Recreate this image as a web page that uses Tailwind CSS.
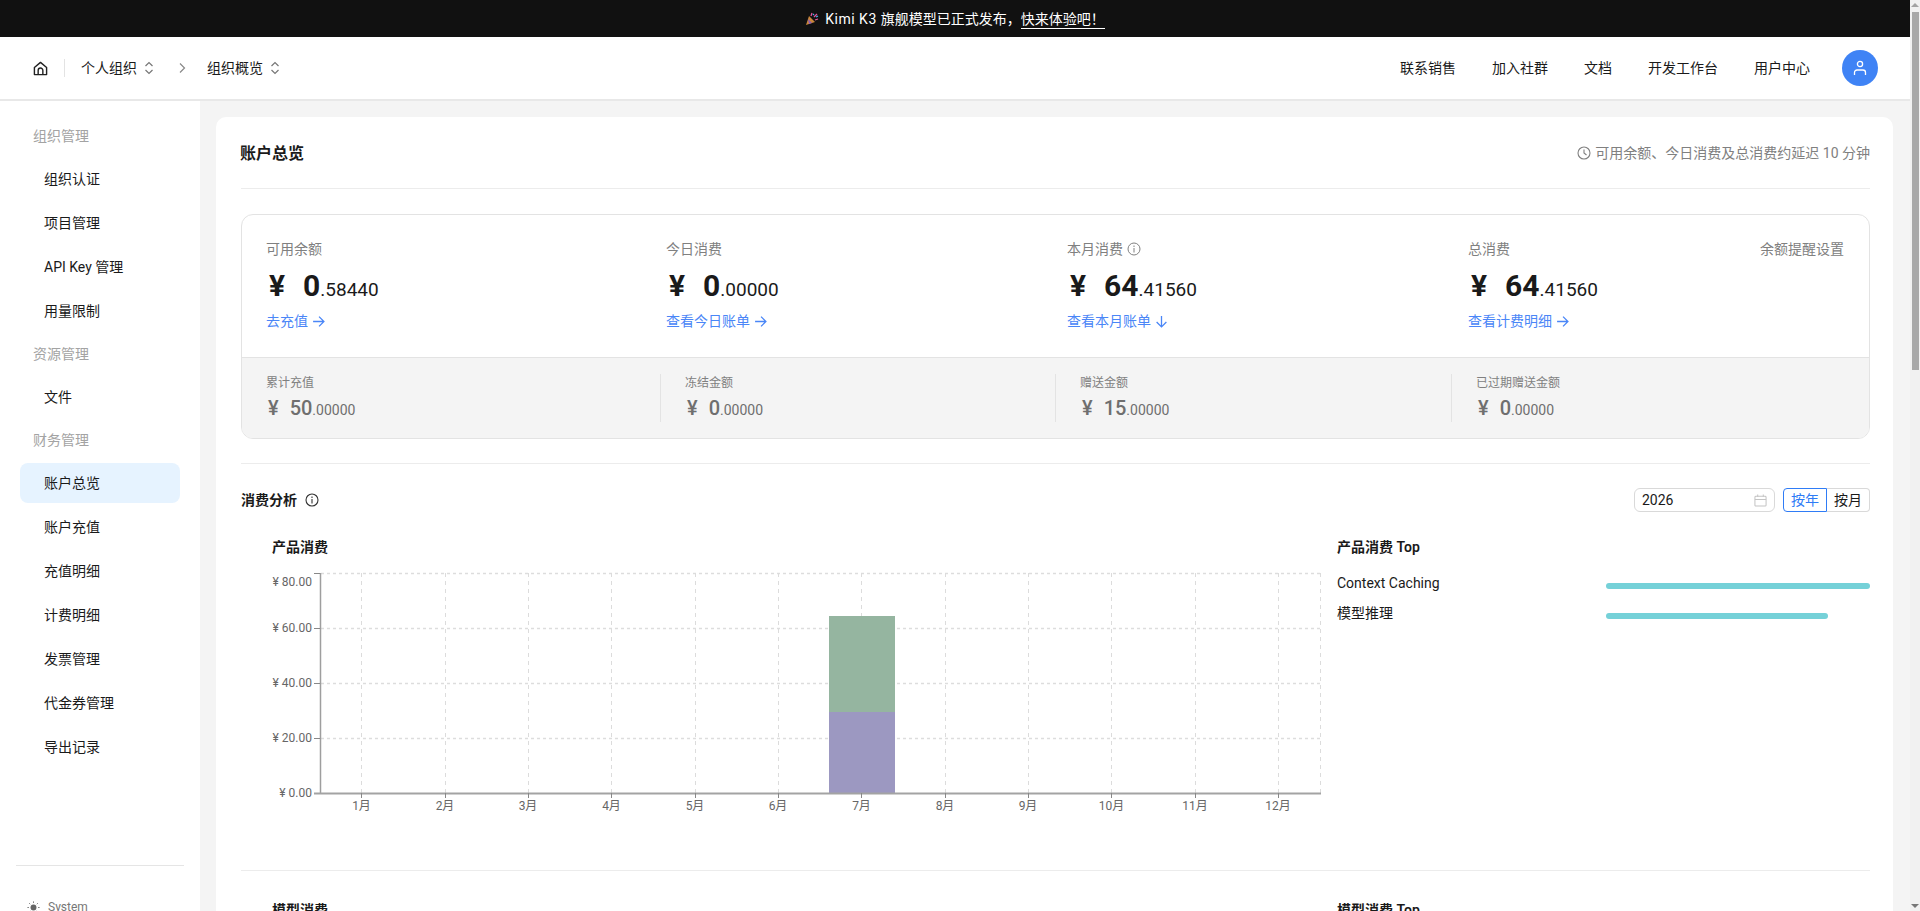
<!DOCTYPE html>
<html lang="zh-CN">
<head>
    <meta charset="UTF-8">
    <meta name="viewport" content="width=device-width, initial-scale=1.0">
    <title>账户总览</title>
    <script src="https://cdn.jsdelivr.net/npm/@tailwindcss/browser@4"></script>
</head>
<body class="h-screen overflow-hidden flex bg-white text-[#1a1a1a] text-sm font-['Roboto','Noto_Sans_CJK_SC',sans-serif]">
    <div class="flex-1 min-w-0 flex flex-col">
        <!-- Banner -->
        <div class="h-[37px] shrink-0 bg-[#111111] text-white flex items-center justify-center gap-[6px]">
            <svg class="w-[14px] h-[14px]" viewBox="0 0 14 14">
                <path d="M1 13 L4 4 L10 10 Z" fill="#c9863a"/>
                <path d="M3 7 L7 11 L4 12 Z" fill="#8a5bb8"/>
                <path d="M6 4 L7 1 M9 5 L12 2 M10 8 L13 7" stroke="#e0559a" stroke-width="1.3"/>
                <path d="M8 2 L9 3 M11 5 L13 4" stroke="#4fb0e8" stroke-width="1.3"/>
            </svg>
            <span><span class="tracking-[0.5px]">Kimi K3 </span>旗舰模型已正式发布，<a class="border-b border-white pb-px">快来体验吧！</a></span>
        </div>

        <!-- Header -->
        <header class="h-[64px] shrink-0 bg-white border-b-2 border-[#e8e8e8] flex items-center justify-between pl-[33px] pr-[32px]">
            <div class="flex items-center">
                <svg class="w-[15px] h-[15px]" viewBox="0 0 16 16" fill="none" stroke="#222" stroke-width="1.5" stroke-linejoin="round">
                    <path d="M1.5 7 L8 1.5 L14.5 7 V14.5 H1.5 Z"/>
                    <path d="M5.5 14.5 V10 A2.5 2.5 0 0 1 10.5 10 V14.5"/>
                </svg>
                <div class="w-px h-[18px] bg-[#e3e3e3] ml-[16px] mr-[16px]"></div>
                <span>个人组织</span>
                <svg class="w-[10px] h-[14px] ml-[7px] text-[#777]" viewBox="0 0 10 14" fill="none" stroke="currentColor" stroke-width="1.2">
                    <path d="M1.5 5 L5 1.5 L8.5 5 M1.5 9 L5 12.5 L8.5 9"/>
                </svg>
                <svg class="w-[7px] h-[12px] ml-[25px] mr-[21px] text-[#888]" viewBox="0 0 7 12" fill="none" stroke="currentColor" stroke-width="1.2">
                    <path d="M1 1.5 L5.5 6 L1 10.5"/>
                </svg>
                <span>组织概览</span>
                <svg class="w-[10px] h-[14px] ml-[7px] text-[#777]" viewBox="0 0 10 14" fill="none" stroke="currentColor" stroke-width="1.2">
                    <path d="M1.5 5 L5 1.5 L8.5 5 M1.5 9 L5 12.5 L8.5 9"/>
                </svg>
            </div>
            <div class="flex items-center gap-[36px]">
                <span>联系销售</span>
                <span>加入社群</span>
                <span>文档</span>
                <span>开发工作台</span>
                <span>用户中心</span>
                <div class="w-[36px] h-[36px] -ml-[4px] rounded-full bg-[#3f83f5] flex items-center justify-center">
                    <svg class="w-[14px] h-[16px]" viewBox="0 0 14 16" fill="none" stroke="white" stroke-width="1.3">
                        <circle cx="7" cy="4" r="2.6"/>
                        <path d="M1.5 15 V12.5 A2.5 2.5 0 0 1 4 10 H10 A2.5 2.5 0 0 1 12.5 12.5 V15"/>
                    </svg>
                </div>
            </div>
        </header>

        <div class="flex-1 min-h-0 flex">
            <!-- Sidebar -->
            <aside class="w-[200px] shrink-0 bg-white flex flex-col px-[16px] pt-[16px]">
                <div class="flex flex-col gap-[4px] flex-1 mx-[4px]">
                    <div class="h-[38px] flex items-center pl-[13px] text-[#a3a3a3]">组织管理</div>
                    <div class="h-[40px] flex items-center pl-[24px]">组织认证</div>
                    <div class="h-[40px] flex items-center pl-[24px]">项目管理</div>
                    <div class="h-[40px] flex items-center pl-[24px]">API Key 管理</div>
                    <div class="h-[40px] flex items-center pl-[24px]">用量限制</div>
                    <div class="h-[38px] flex items-center pl-[13px] text-[#a3a3a3]">资源管理</div>
                    <div class="h-[40px] flex items-center pl-[24px]">文件</div>
                    <div class="h-[38px] flex items-center pl-[13px] text-[#a3a3a3]">财务管理</div>
                    <div class="h-[40px] flex items-center pl-[24px] rounded-lg bg-[#e6f3ff]">账户总览</div>
                    <div class="h-[40px] flex items-center pl-[24px]">账户充值</div>
                    <div class="h-[40px] flex items-center pl-[24px]">充值明细</div>
                    <div class="h-[40px] flex items-center pl-[24px]">计费明细</div>
                    <div class="h-[40px] flex items-center pl-[24px]">发票管理</div>
                    <div class="h-[40px] flex items-center pl-[24px]">代金券管理</div>
                    <div class="h-[40px] flex items-center pl-[24px]">导出记录</div>
                </div>
                <div class="h-[46px] shrink-0 border-t border-[#e5e5e5] pl-[11px] pt-[33px] flex items-start gap-[8px] text-xs text-[#777]">
                    <svg class="w-[13px] h-[13px] shrink-0 mt-[2px]" viewBox="0 0 14 14" fill="#666" stroke="#666">
                        <circle cx="7" cy="7" r="3.2" stroke="none"/>
                        <path d="M7 0.5 V2 M7 12 V13.5 M0.5 7 H2 M12 7 H13.5 M2.4 2.4 L3.4 3.4 M10.6 10.6 L11.6 11.6 M2.4 11.6 L3.4 10.6 M10.6 3.4 L11.6 2.4" stroke-width="1"/>
                    </svg>
                    <span class="leading-[16px]">System</span>
                </div>
            </aside>

            <!-- Main -->
            <main class="flex-1 min-w-0 bg-[#f4f4f4] pt-[16px] pl-[16px] pr-[17px]">
                <div class="bg-white rounded-t-[10px] pl-[25px] pr-[23px] h-[820px]">
                    <div class="h-[72px] border-b border-[#ececec] flex items-center justify-between">
                        <h1 class="text-base font-semibold mt-[2px] -ml-px">账户总览</h1>
                        <div class="flex items-center gap-[4px] text-[#808080]">
                            <svg class="w-[14px] h-[14px]" viewBox="0 0 14 14" fill="none" stroke="currentColor" stroke-width="1.1">
                                <circle cx="7" cy="7" r="6"/>
                                <path d="M7 3.5 V7 L9.5 9"/>
                            </svg>
                            <span>可用余额、今日消费及总消费约延迟 10 分钟</span>
                        </div>
                    </div>

                    <!-- Balance box -->
                    <div class="mt-[25px] border border-[#e3e3e3] rounded-xl overflow-hidden">
                        <div class="h-[142px] pl-[24px] pr-[25px] pt-[23px] grid grid-cols-[400px_401px_401px_1fr]">
                            <div>
                                <div class="h-[22px] leading-[22px] text-[#808080]">可用余额</div>
                                <div class="mt-[6px] h-[40px] leading-[40px] whitespace-nowrap"><span class="text-[30px] font-bold ml-[3px] mr-[18px]">¥</span><span class="text-[30px] font-bold">0</span><span class="text-[19px]">.58440</span></div>
                                <a class="mt-[4px] h-[22px] flex items-center gap-[4px] text-[#4a86f7]">去充值
                                    <svg class="w-[13px] h-[13px]" viewBox="0 0 12 12" fill="none" stroke="currentColor" stroke-width="1.2"><path d="M1 6 H11 M6.5 1.5 L11 6 L6.5 10.5"/></svg>
                                </a>
                            </div>
                            <div>
                                <div class="h-[22px] leading-[22px] text-[#808080]">今日消费</div>
                                <div class="mt-[6px] h-[40px] leading-[40px] whitespace-nowrap"><span class="text-[30px] font-bold ml-[3px] mr-[18px]">¥</span><span class="text-[30px] font-bold">0</span><span class="text-[19px]">.00000</span></div>
                                <a class="mt-[4px] h-[22px] flex items-center gap-[4px] text-[#4a86f7]">查看今日账单
                                    <svg class="w-[13px] h-[13px]" viewBox="0 0 12 12" fill="none" stroke="currentColor" stroke-width="1.2"><path d="M1 6 H11 M6.5 1.5 L11 6 L6.5 10.5"/></svg>
                                </a>
                            </div>
                            <div>
                                <div class="h-[22px] flex items-center gap-[4px] text-[#808080]">本月消费
                                    <svg class="w-[14px] h-[14px]" viewBox="0 0 14 14" fill="none" stroke="currentColor" stroke-width="1"><circle cx="7" cy="7" r="6"/><path d="M7 6 V10.5 M7 3.5 V5"/></svg>
                                </div>
                                <div class="mt-[6px] h-[40px] leading-[40px] whitespace-nowrap"><span class="text-[30px] font-bold ml-[3px] mr-[18px]">¥</span><span class="text-[30px] font-bold">64</span><span class="text-[19px]">.41560</span></div>
                                <a class="mt-[4px] h-[22px] flex items-center gap-[4px] text-[#4a86f7]">查看本月账单
                                    <svg class="w-[13px] h-[13px]" viewBox="0 0 12 12" fill="none" stroke="currentColor" stroke-width="1.2"><path d="M6 1 V11 M1.5 6.5 L6 11 L10.5 6.5"/></svg>
                                </a>
                            </div>
                            <div class="relative">
                                <div class="h-[22px] leading-[22px] text-[#808080]">总消费</div>
                                <div class="mt-[6px] h-[40px] leading-[40px] whitespace-nowrap"><span class="text-[30px] font-bold ml-[3px] mr-[18px]">¥</span><span class="text-[30px] font-bold">64</span><span class="text-[19px]">.41560</span></div>
                                <a class="mt-[4px] h-[22px] flex items-center gap-[4px] text-[#4a86f7]">查看计费明细
                                    <svg class="w-[13px] h-[13px]" viewBox="0 0 12 12" fill="none" stroke="currentColor" stroke-width="1.2"><path d="M1 6 H11 M6.5 1.5 L11 6 L6.5 10.5"/></svg>
                                </a>
                                <span class="absolute top-0 right-0 leading-[22px] text-[#808080]">余额提醒设置</span>
                            </div>
                        </div>
                        <div class="h-[81px] bg-[#f4f4f4] border-t border-[#e3e3e3] pl-[24px] pr-[25px] pt-[16px] grid grid-cols-[394px_395px_396px_1fr]">
                            <div class="h-[48px]">
                                <div class="text-xs leading-[18px] text-[#808080]">累计充值</div>
                                <div class="h-[30px] mt-px leading-[30px] text-[#6f6f6f] whitespace-nowrap"><span class="text-[20px] font-medium ml-[2px] mr-[11px]">¥</span><span class="text-[20px] font-medium">50</span><span class="text-sm">.00000</span></div>
                            </div>
                            <div class="h-[48px] border-l border-[#e3e3e3] pl-[24px]">
                                <div class="text-xs leading-[18px] text-[#808080]">冻结金额</div>
                                <div class="h-[30px] mt-px leading-[30px] text-[#6f6f6f] whitespace-nowrap"><span class="text-[20px] font-medium ml-[2px] mr-[11px]">¥</span><span class="text-[20px] font-medium">0</span><span class="text-sm">.00000</span></div>
                            </div>
                            <div class="h-[48px] border-l border-[#e3e3e3] pl-[24px]">
                                <div class="text-xs leading-[18px] text-[#808080]">赠送金额</div>
                                <div class="h-[30px] mt-px leading-[30px] text-[#6f6f6f] whitespace-nowrap"><span class="text-[20px] font-medium ml-[2px] mr-[11px]">¥</span><span class="text-[20px] font-medium">15</span><span class="text-sm">.00000</span></div>
                            </div>
                            <div class="h-[48px] border-l border-[#e3e3e3] pl-[24px]">
                                <div class="text-xs leading-[18px] text-[#808080]">已过期赠送金额</div>
                                <div class="h-[30px] mt-px leading-[30px] text-[#6f6f6f] whitespace-nowrap"><span class="text-[20px] font-medium ml-[2px] mr-[11px]">¥</span><span class="text-[20px] font-medium">0</span><span class="text-sm">.00000</span></div>
                            </div>
                        </div>
                    </div>

                    <!-- Analysis -->
                    <div class="mt-[24px] border-t border-[#ececec] pt-[24px]">
                        <div class="h-[24px] flex items-center justify-between">
                            <div class="flex items-center gap-[8px] font-semibold">消费分析
                                <svg class="w-[14px] h-[14px]" viewBox="0 0 14 14" fill="none" stroke="#333" stroke-width="1.1"><circle cx="7" cy="7" r="6"/><path d="M7 6 V10.5 M7 3.5 V5"/></svg>
                            </div>
                            <div class="flex items-center">
                                <div class="w-[141px] h-[24px] border border-[#d9d9d9] rounded-md flex items-center justify-between px-[7px] mr-[8px]">
                                    <span>2026</span>
                                    <svg class="w-[13px] h-[13px]" viewBox="0 0 14 14" fill="none" stroke="#c4c4c4" stroke-width="1.1"><rect x="1" y="2.5" width="12" height="10.5" rx="1"/><path d="M1 6 H13 M4 0.5 V3 M10 0.5 V3"/></svg>
                                </div>
                                <div class="w-[44px] h-[24px] border border-[#2f7cf6] rounded-l-[4px] text-[#2f7cf6] flex items-center justify-center">按年</div>
                                <div class="w-[43px] h-[24px] border border-l-0 border-[#d9d9d9] rounded-r-[4px] flex items-center justify-center">按月</div>
                            </div>
                        </div>

                        <div class="grid grid-cols-[1096px_1fr] mt-[24px]">
                            <div>
                                <h2 class="pl-[31px] h-[22px] leading-[22px] font-semibold">产品消费</h2>
                                <svg class="block ml-[19px] mt-[7px]" width="1070" height="256" viewBox="0 0 1070 256" font-size="12" fill="#666">
                                    <!-- horizontal grid -->
                                    <g stroke="#dddddd" stroke-width="1.5" stroke-dasharray="3 3">
                                        <path d="M61 8.5 H1061"/>
                                        <path d="M61 63.5 H1061"/>
                                        <path d="M61 118.5 H1061"/>
                                        <path d="M61 173.5 H1061"/>
                                    </g>
                                    <!-- vertical grid -->
                                    <g stroke="#dcdcdc" stroke-width="1" stroke-dasharray="4 4">
                                        <path d="M101.5 8 V228"/>
                                        <path d="M185.5 8 V228"/>
                                        <path d="M268.5 8 V228"/>
                                        <path d="M351.5 8 V228"/>
                                        <path d="M435.5 8 V228"/>
                                        <path d="M518.5 8 V228"/>
                                        <path d="M601.5 8 V228"/>
                                        <path d="M685.5 8 V228"/>
                                        <path d="M768.5 8 V228"/>
                                        <path d="M851.5 8 V228"/>
                                        <path d="M935.5 8 V228"/>
                                        <path d="M1018.5 8 V228"/>
                                        <path d="M1060.5 8 V228"/>
                                    </g>
                                    <!-- bars -->
                                    <rect x="569" y="147" width="66" height="81" fill="#9c98c1"/>
                                    <rect x="569" y="51" width="66" height="96" fill="#95b5a0"/>
                                    <!-- axes -->
                                    <path d="M60.5 8 V229" stroke="#9e9e9e" stroke-width="1.5"/>
                                    <path d="M54 228.5 H1061" stroke="#a3a3a3" stroke-width="2"/>
                                    <g stroke="#888">
                                        <path d="M54 8.5 H60 M54 63.5 H60 M54 118.5 H60 M54 173.5 H60"/>
                                        <path d="M101.5 228 V233 M185.5 228 V233 M268.5 228 V233 M351.5 228 V233 M435.5 228 V233 M518.5 228 V233 M601.5 228 V233 M685.5 228 V233 M768.5 228 V233 M851.5 228 V233 M935.5 228 V233 M1018.5 228 V233"/>
                                    </g>
                                    <!-- y labels -->
                                    <g text-anchor="end">
                                        <text x="52" y="21">¥ 80.00</text>
                                        <text x="52" y="67">¥ 60.00</text>
                                        <text x="52" y="122">¥ 40.00</text>
                                        <text x="52" y="177">¥ 20.00</text>
                                        <text x="52" y="232">¥ 0.00</text>
                                    </g>
                                    <!-- x labels -->
                                    <g text-anchor="middle">
                                        <text x="101.5" y="245">1月</text>
                                        <text x="185" y="245">2月</text>
                                        <text x="268" y="245">3月</text>
                                        <text x="351.5" y="245">4月</text>
                                        <text x="435" y="245">5月</text>
                                        <text x="518" y="245">6月</text>
                                        <text x="601.5" y="245">7月</text>
                                        <text x="685" y="245">8月</text>
                                        <text x="768" y="245">9月</text>
                                        <text x="851.5" y="245">10月</text>
                                        <text x="935" y="245">11月</text>
                                        <text x="1018" y="245">12月</text>
                                    </g>
                                </svg>
                            </div>
                            <div>
                                <h2 class="h-[22px] leading-[22px] font-semibold">产品消费 Top</h2>
                                <div class="mt-[14px] h-[22px] flex items-center">
                                    <span class="w-[269px] shrink-0">Context Caching</span>
                                    <div class="flex-1 mt-[6px]"><div class="h-[6px] w-full rounded-full bg-[#75d1d8]"></div></div>
                                </div>
                                <div class="mt-[8px] h-[22px] flex items-center">
                                    <span class="w-[269px] shrink-0">模型推理</span>
                                    <div class="flex-1 mt-[6px]"><div class="h-[6px] w-[222px] rounded-full bg-[#75d1d8]"></div></div>
                                </div>
                            </div>
                        </div>
                    </div>

                    <!-- Model section, cut by the window -->
                    <div class="mt-[49px] border-t border-[#ececec] pt-[28px] grid grid-cols-[1096px_1fr]">
                        <h2 class="pl-[31px] h-[22px] leading-[22px] font-semibold">模型消费</h2>
                        <h2 class="h-[22px] leading-[22px] font-semibold">模型消费 Top</h2>
                    </div>
                </div>
            </main>
        </div>
    </div>

    <!-- Scrollbar -->
    <div class="w-[10px] shrink-0 bg-[#f1f1f1] flex flex-col items-center justify-between">
        <div class="flex flex-col items-center w-full">
            <div class="w-0 h-0 mt-[3px] border-x-[4px] border-x-transparent border-b-[4px] border-b-[#a3a3a3]"></div>
            <div class="w-[7px] h-[358px] mt-[5px] bg-[#a8a8a8]"></div>
        </div>
        <div class="w-0 h-0 mb-[3px] border-x-[4px] border-x-transparent border-t-[4px] border-t-[#777]"></div>
    </div>
</body>
</html>
